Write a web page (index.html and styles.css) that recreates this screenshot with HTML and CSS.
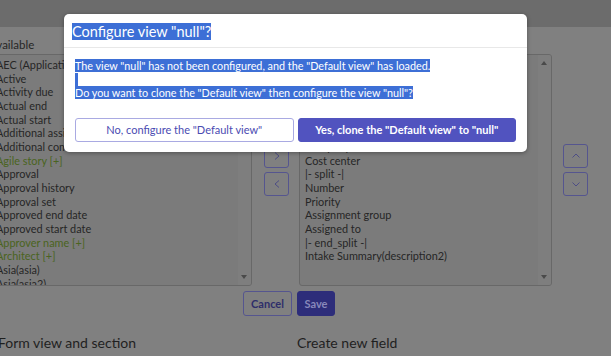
FILE: index.html
```html
<!DOCTYPE html>
<html lang="en">
<head>
<meta charset="utf-8">
<title>Form Designer</title>
<link rel="stylesheet" href="styles.css">
</head>
<body>
<div class="topbar"></div>
<div class="designer">
  <div class="lists">
    <div class="col col-left">
      <div class="col-label">Available</div>
      <div class="listbox">
        <ul class="items">
          <li>AEC (Application Environment Code)</li>
          <li>Active</li>
          <li>Activity due</li>
          <li>Actual end</li>
          <li>Actual start</li>
          <li>Additional assignee list</li>
          <li>Additional comments</li>
          <li class="ref">Agile story [+]</li>
          <li>Approval</li>
          <li>Approval history</li>
          <li>Approval set</li>
          <li>Approved end date</li>
          <li>Approved start date</li>
          <li class="ref">Approver name [+]</li>
          <li class="ref">Architect [+]</li>
          <li>Asia(asia)</li>
          <li>Asia(asia2)</li>
        </ul>
        <div class="scrollbar"><span class="arr up"></span><span class="arr down"></span></div>
      </div>
    </div>
    <div class="movers">
      <button class="mv"><svg viewBox="0 0 10 10" width="10" height="10"><polyline points="3,1.5 7,5 3,8.5"/></svg></button>
      <button class="mv"><svg viewBox="0 0 10 10" width="10" height="10"><polyline points="7,1.5 3,5 7,8.5"/></svg></button>
    </div>
    <div class="col col-right">
      <div class="col-label">Selected</div>
      <div class="listbox">
        <ul class="items">
          <li>|- begin_split -|</li>
          <li>Caller</li>
          <li>Category</li>
          <li>Subcategory</li>
          <li>Service</li>
          <li>Configuration item</li>
          <li>Company</li>
          <li>Cost center</li>
          <li>|- split -|</li>
          <li>Number</li>
          <li>Priority</li>
          <li>Assignment group</li>
          <li>Assigned to</li>
          <li>|- end_split -|</li>
          <li>Intake Summary(description2)</li>
        </ul>
        <div class="scrollbar"><span class="arr up"></span><span class="arr down"></span></div>
      </div>
    </div>
    <div class="movers">
      <button class="mv"><svg viewBox="0 0 10 10" width="10" height="10"><polyline points="1.5,6.5 5,3 8.5,6.5"/></svg></button>
      <button class="mv"><svg viewBox="0 0 10 10" width="10" height="10"><polyline points="1.5,3.5 5,7 8.5,3.5"/></svg></button>
    </div>
  </div>
  <div class="actions">
    <button class="btn-cancel">Cancel</button>
    <button class="btn-save">Save</button>
  </div>
  <div class="sections">
    <h2>Form view and section</h2>
    <h2>Create new field</h2>
  </div>
</div>

<div class="modal">
  <div class="modal-head"><h1><span class="sel">Configure view "null"?</span></h1></div>
  <div class="modal-body">
    <p class="msg"><span class="sel">The view "null" has not been configured, and the "Default view" has loaded.</span><br><span class="sel gap"></span><br><span class="sel">Do you want to clone the "Default view" then configure the view "null"?</span></p>
    <div class="modal-actions">
      <button class="btn-secondary">No, configure the "Default view"</button>
      <button class="btn-primary">Yes, clone the "Default view" to "null"</button>
    </div>
  </div>
</div>
</body>
</html>
```
FILE: styles.css
```css
* { box-sizing: border-box; }
html, body { margin: 0; padding: 0; }
body {
  width: 611px;
  height: 356px;
  overflow: hidden;
  position: relative;
  background: #808080;
  font-family: Lato, "Open Sans", sans-serif;
  color: #262626;
}
.topbar { height: 27px; background: #6c6c6c; }
.designer { margin-left: -10px; width: 600px; }
.lists { display: flex; align-items: flex-start; }
.col-left { width: 262px; }
.col-right { width: 253px; margin-left: 10px; }
.col-label { height: 27px; font-size: 11.5px; line-height: 16px; padding: 10px 0 0 0; margin-left: -1px; color: #262626; }
.listbox {
  position: relative;
  height: 232px;
  background: #7b7b7b;
  border: 1px solid #686868;
  border-radius: 3px;
  overflow: hidden;
}
.items { list-style: none; margin: 0; padding: 3px 0 0 5px; font-size: 10.9px; line-height: 13.65px; }
.items li { white-space: nowrap; }
.items li.ref { color: #4a6420; }
.scrollbar {
  position: absolute; top: 0; right: 0; bottom: 0; width: 13px;
  background: #7e7e7e;
}
.arr { position: absolute; left: 3px; width: 0; height: 0; border-left: 3.5px solid transparent; border-right: 3.5px solid transparent; }
.arr.up { top: 6px; border-bottom: 4px solid #4a4a4a; }
.arr.down { bottom: 6px; border-top: 4px solid #4a4a4a; }
.movers { display: flex; flex-direction: column; gap: 4px; margin-top: 117px; margin-left: 12px; }
.col-right + .movers { margin-left: 11px; }
.mv {
  width: 25px; height: 24px; padding: 0;
  background: transparent;
  border: 1px solid #55558f;
  border-radius: 3px;
  display: flex; align-items: center; justify-content: center;
}
.mv svg { fill: none; stroke: #4d4d85; stroke-width: 1; }
.actions { display: flex; justify-content: center; gap: 5px; margin-top: 5px; padding-right: 2px; }
.actions button { height: 25px; border-radius: 3px; font-family: inherit; font-size: 11px; font-weight: 700; padding: 0; }
.btn-cancel { width: 49px; background: transparent; border: 1px solid #55558f; color: #2e2e6a; }
.btn-save { width: 38px; background: #2d2d7a; border: 1px solid #2d2d7a; color: #8888bb; }
.sections { display: flex; margin-top: 17px; }
.sections h2 { margin: 0; font-size: 14px; font-weight: 400; line-height: 20px; color: #1f1f1f; }
.sections h2:first-child { width: 307px; padding-left: 8px; }

.modal {
  position: absolute;
  left: 64px; top: 14px;
  width: 463px; height: 138px;
  background: #fff;
  border-radius: 5px;
  box-shadow: 0 1px 4px rgba(0,0,0,0.35);
}
.modal-head { height: 34px; border-bottom: 1px solid #e8e8e8; padding: 9px 0 0 8px; }
.modal-head h1 { margin: 0; font-size: 14.5px; font-weight: 400; line-height: 17px; color: #fff; }
.sel { background: #3d6fd6; color: #fff; }
.sel.gap { display: inline-block; width: 3px; height: 13.5px; vertical-align: top; }
.modal-body { padding: 11px 11px 11px 11px; }
.msg { margin: 0; font-size: 10.8px; line-height: 13.5px; }
.modal-actions { display: flex; gap: 4px; margin-top: 18px; }
.modal-actions button {
  flex: 1; height: 24px; border-radius: 3px; font-family: inherit; font-size: 11px; padding: 0;
}
.btn-secondary { background: #fff; border: 1px solid #a9aae2; color: #4a4bb2; }
.btn-primary { background: #5153bf; border: 1px solid #5153bf; color: #fff; font-weight: 700; }
```
